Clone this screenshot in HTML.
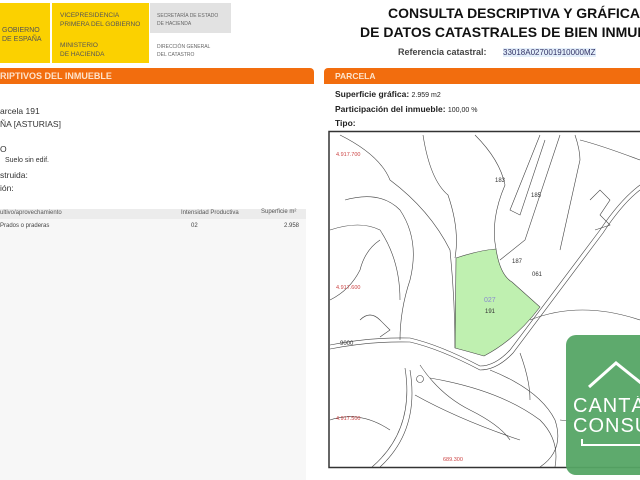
<!DOCTYPE html>
<html><head><meta charset="utf-8"><style>
body{margin:0;width:640px;height:480px;overflow:hidden;background:#fff;font-family:"Liberation Sans",sans-serif;position:relative}
.a{position:absolute;white-space:nowrap}
#wrap{position:absolute;left:0;top:0;width:640px;height:480px;overflow:hidden}
</style></head><body><div id="wrap">
<div class="a" style="left:0;top:3px;width:50px;height:60px;background:#fbd100"></div>
<div class="a" style="left:52px;top:3px;width:97px;height:60px;background:#fbd100"></div>
<div class="a" style="left:150px;top:3px;width:81px;height:30px;background:#e2e2e2"></div>
<div class="a" style="left:2px;top:26px;font-size:7px;line-height:9px;color:#555">GOBIERNO<br>DE ESPAÑA</div>
<div class="a" style="left:60px;top:11px;font-size:6.5px;line-height:9px;color:#555">VICEPRESIDENCIA<br>PRIMERA DEL GOBIERNO</div>
<div class="a" style="left:60px;top:41px;font-size:6.5px;line-height:9px;color:#555">MINISTERIO<br>DE HACIENDA</div>
<div class="a" style="left:157px;top:12px;font-size:5px;line-height:8px;color:#666">SECRETARÍA DE ESTADO<br>DE HACIENDA</div>
<div class="a" style="left:157px;top:43px;font-size:5px;line-height:8px;color:#666">DIRECCIÓN GENERAL<br>DEL CATASTRO</div>
<div class="a" style="left:0;top:68px;width:314px;height:16px;background:#f26d0e;border-radius:0 4px 0 0"></div>
<div class="a" style="left:0;top:71px;font-size:9px;font-weight:bold;color:#fde3cc">RIPTIVOS DEL INMUEBLE</div>
<div class="a" style="left:0;top:105px;font-size:8.5px;line-height:13px;color:#333">arcela 191<br>ÑA [ASTURIAS]</div>
<div class="a" style="left:0;top:143px;font-size:8.5px;line-height:13px;color:#333">O</div>
<div class="a" style="left:5px;top:157px;font-size:7px;color:#333">Suelo sin edif.</div>
<div class="a" style="left:0;top:169px;font-size:8.5px;line-height:13px;color:#333">struida:<br>ión:</div>
<div class="a" style="left:0;top:209px;width:306px;height:271px;background:#f7f7f7"></div>
<div class="a" style="left:0;top:209px;width:306px;height:10px;background:#ececec"></div>
<div class="a" style="left:0;top:210px;font-size:6px;color:#555">ultivo/aprovechamiento</div>
<div class="a" style="left:181px;top:210px;font-size:6px;color:#555">Intensidad Productiva</div>
<div class="a" style="left:261px;top:209px;font-size:6px;color:#555">Superficie m²</div>
<div class="a" style="left:0;top:223px;font-size:6px;color:#444">Prados o praderas</div>
<div class="a" style="left:191px;top:223px;font-size:6px;color:#444">02</div>
<div class="a" style="left:284px;top:223px;font-size:6px;color:#444">2.958</div>
<div class="a" style="left:388px;top:5px;font-size:14px;font-weight:bold;color:#111">CONSULTA DESCRIPTIVA Y GRÁFICA</div>
<div class="a" style="left:360px;top:24px;font-size:14px;font-weight:bold;color:#111">DE DATOS CATASTRALES DE BIEN INMUEBLE</div>
<div class="a" style="left:398px;top:47px;font-size:9px;color:#444;font-weight:bold">Referencia catastral:</div>
<div class="a" style="left:503px;top:48px;font-size:8px;color:#336;background:#e3eefa">33018A027001910000MZ</div>
<div class="a" style="left:324px;top:68px;width:316px;height:16px;background:#f26d0e;border-radius:4px 0 0 0"></div>
<div class="a" style="left:335px;top:71px;font-size:8.5px;font-weight:bold;color:#fde3cc">PARCELA</div>
<div class="a" style="left:335px;top:88px;font-size:8.5px;line-height:12.5px;color:#222;font-weight:bold">Superficie gráfica: <span style="font-weight:normal;font-size:7px">2.959 m2</span><br>Participación del inmueble: <span style="font-weight:normal;font-size:7px">100,00 %</span><br>Tipo:</div>
<svg class="a" style="left:0;top:0" width="640" height="480" viewBox="0 0 640 480">
<rect x="329" y="131.5" width="320" height="336" fill="none" stroke="#333" stroke-width="1.5"/>
<path d="M456,258 Q480,250 496,249 Q500,275 512,282 L540,307 Q515,340 484,356 Q470,352 455,348 Z" fill="#bff0b0" stroke="#444" stroke-width=".6"/>
<g fill="none" stroke="#444" stroke-width=".6">
<path d="M330,345 Q370,337 410,338 Q440,345 480,366 Q495,366 510,350 L600,230 Q620,200 640,185"/>
<path d="M330,349 Q370,341 410,342 Q440,349 480,370 Q497,370 513,353 L603,233 Q622,204 640,190"/>
<path d="M340,135 Q380,155 390,180 Q430,210 450,250 Q455,300 455,348"/>
<path d="M423,135 Q430,180 448,195 Q460,230 455,258"/>
<path d="M345,200 Q380,190 400,210 Q420,240 410,280 Q400,310 400,340"/>
<path d="M330,230 Q360,220 380,230 Q400,260 400,300"/>
<path d="M360,320 Q370,310 380,320 L390,330 L380,337"/>
<path d="M475,135 Q500,160 505,185 Q490,220 496,249"/>
<path d="M540,135 L510,210 L520,215 L545,140"/>
<path d="M560,135 L525,240 L500,260"/>
<path d="M575,135 Q580,150 580,160 L560,250"/>
<path d="M580,140 Q600,145 640,160"/>
<path d="M590,200 L600,190 L610,200 L600,215 L610,225 L595,230"/>
<path d="M330,300 Q350,290 360,270 Q365,250 380,240"/>
<path d="M420,365 Q440,395 470,410 Q500,425 510,440"/>
<path d="M410,370 Q420,430 380,467"/>
<path d="M405,368 Q415,430 372,467"/>
<path d="M430,378 Q500,390 540,420 Q560,440 555,467"/>
<path d="M490,370 Q540,390 555,420 Q565,450 540,467"/>
<path d="M415,395 Q460,420 520,440"/>
<path d="M520,353 Q530,380 530,400"/>
<path d="M330,420 Q360,410 390,430"/>
<path d="M560,420 Q600,425 640,425"/>
<path d="M530,320 Q580,300 640,320"/>
<circle cx="420" cy="379" r="3.5"/>
</g>
<g font-size="6" font-family="Liberation Sans" fill="#333">
<text x="495" y="182">183</text><text x="531" y="197">185</text>
<text x="512" y="263">187</text><text x="532" y="276">061</text>
<text x="485" y="313">191</text><text x="484" y="302" fill="#8a8ad0" font-size="7">027</text>
<text x="340" y="345">9000</text>
</g>
<g font-size="5.5" font-family="Liberation Sans" fill="#c44">
<text x="336" y="156">4.917.700</text><text x="336" y="289">4.917.600</text>
<text x="336" y="420">4.917.500</text><text x="443" y="461">689.300</text>
</g>
</svg>
<div class="a" style="left:566px;top:335px;width:74px;height:140px;background:#55a565;border-radius:10px 0 0 10px;opacity:.95"></div>
<svg class="a" style="left:566px;top:335px" width="74" height="140"><path d="M23,52 L50,28 L80,52" fill="none" stroke="#fff" stroke-width="3"/><path d="M16,104 L16,110 L74,110" fill="none" stroke="#fff" stroke-width="2"/></svg>
<div class="a" style="left:573px;top:396px;width:67px;overflow:hidden;font-size:20px;line-height:20px;color:#fff;letter-spacing:1px">CANTÁ<br>CONSU</div>
</div></body></html>
